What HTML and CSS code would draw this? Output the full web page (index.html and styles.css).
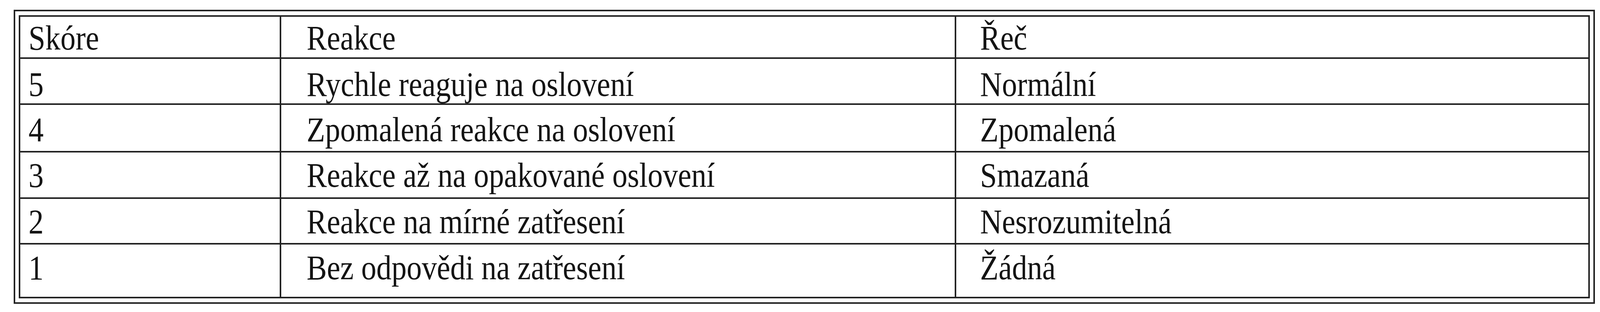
FILE: index.html
```html
<!DOCTYPE html>
<html lang="cs">
<head>
<meta charset="utf-8">
<title>Skóre</title>
<link rel="stylesheet" href="styles.css">
</head>
<body>
<div class="frame">
  <div class="grid" role="table">
    <div class="row r-head" role="row">
      <div class="cell c1" role="columnheader"><span class="t">Skóre</span></div>
      <div class="cell c2" role="columnheader"><span class="t">Reakce</span></div>
      <div class="cell c3" role="columnheader"><span class="t">Řeč</span></div>
    </div>
    <div class="row r5" role="row">
      <div class="cell c1" role="cell"><span class="t">5</span></div>
      <div class="cell c2" role="cell"><span class="t">Rychle reaguje na oslovení</span></div>
      <div class="cell c3" role="cell"><span class="t">Normální</span></div>
    </div>
    <div class="row r4" role="row">
      <div class="cell c1" role="cell"><span class="t">4</span></div>
      <div class="cell c2" role="cell"><span class="t">Zpomalená reakce na oslovení</span></div>
      <div class="cell c3" role="cell"><span class="t">Zpomalená</span></div>
    </div>
    <div class="row r3" role="row">
      <div class="cell c1" role="cell"><span class="t">3</span></div>
      <div class="cell c2" role="cell"><span class="t">Reakce až na opakované oslovení</span></div>
      <div class="cell c3" role="cell"><span class="t">Smazaná</span></div>
    </div>
    <div class="row r2" role="row">
      <div class="cell c1" role="cell"><span class="t">2</span></div>
      <div class="cell c2" role="cell"><span class="t">Reakce na mírné zatřesení</span></div>
      <div class="cell c3" role="cell"><span class="t">Nesrozumitelná</span></div>
    </div>
    <div class="row r1" role="row">
      <div class="cell c1" role="cell"><span class="t">1</span></div>
      <div class="cell c2" role="cell"><span class="t">Bez odpovědi na zatřesení</span></div>
      <div class="cell c3" role="cell"><span class="t">Žádná</span></div>
    </div>
  </div>
</div>
</body>
</html>
```
FILE: styles.css
```css
html, body {
  margin: 0;
  padding: 0;
  background: #ffffff;
}

body {
  padding: 25px 0 0 35px;
  font-family: "Liberation Serif", "Times New Roman", serif;
  font-size: 88px;
  line-height: 88px;
  color: #141414;
}

.frame {
  width: fit-content;
  border: 4px solid #222222;
  padding: 10px 9px 10px 9px;
}

.grid {
  display: grid;
  grid-template-columns: 664px 1724px 1618px;
  grid-template-rows: 104px 114px 118px 115px 113px 134px;
  gap: 4px;
  background: #222222;
  border: 4px solid #222222;
}

.row {
  display: contents;
}

.cell {
  background: #ffffff;
  white-space: nowrap;
  box-sizing: border-box;
  overflow: hidden;
}

/* the typeset text of the table is slightly condensed */
.t {
  display: inline-block;
  transform: scaleX(0.88);
  transform-origin: 0 0;
}

.c1 { padding-left: 21px; }
.c2 { padding-left: 65px; }
.c3 { padding-left: 61px; }

.r-head .cell { padding-top: 11px; }
.r5 .cell { padding-top: 22px; }
.r4 .cell { padding-top: 20px; }
.r3 .cell { padding-top: 15px; }
.r2 .cell { padding-top: 15px; }
.r1 .cell { padding-top: 16px; }
```
